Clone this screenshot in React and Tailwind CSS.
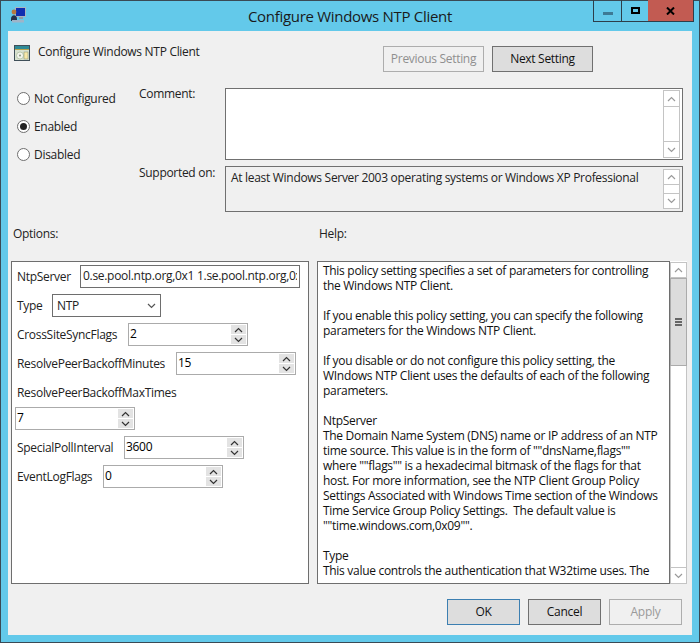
import React from "react";

const font = { fontFamily: "'Open Sans', 'Noto Sans', sans-serif" };

const helpLines = [
  "This policy setting specifies a set of parameters for controlling",
  "the Windows NTP Client.",
  "",
  "If you enable this policy setting, you can specify the following",
  "parameters for the Windows NTP Client.",
  "",
  "If you disable or do not configure this policy setting, the",
  "WIndows NTP Client uses the defaults of each of the following",
  "parameters.",
  "",
  "NtpServer",
  "The Domain Name System (DNS) name or IP address of an NTP",
  "time source. This value is in the form of \"\"dnsName,flags\"\"",
  "where \"\"flags\"\" is a hexadecimal bitmask of the flags for that",
  "host. For more information, see the NTP Client Group Policy",
  "Settings Associated with Windows Time section of the Windows",
  "Time Service Group Policy Settings.  The default value is",
  "\"\"time.windows.com,0x09\"\".",
  "",
  "Type",
  "This value controls the authentication that W32time uses. The",
];

function Chevron({ up, className = "" }) {
  return (
    <svg width="9" height="6" viewBox="0 0 9 6" className={className}>
      <path d={up ? "M1 5 L4.5 1.5 L8 5" : "M1 1 L4.5 4.5 L8 1"} fill="none" stroke="currentColor" strokeWidth="1.2" />
    </svg>
  );
}

function ScrollBtn({ up, className = "h-[17px]" }) {
  return (
    <div className={`flex w-[17px] items-center justify-center border border-[#c4c4c4] bg-white text-[#9a9a9a] ${className}`}>
      <Chevron up={up} />
    </div>
  );
}

function Spinner({ value, className = "" }) {
  return (
    <div className={`flex h-[23px] w-[120px] border border-[#ababab] bg-white pr-[1px] ${className}`}>
      <span className="flex-1 pl-[1px] text-[12px] leading-[19px] text-black">{value}</span>
      <div className="flex w-[15px] flex-col gap-[1px] pt-[1px]">
        <div className="flex h-[9px] items-center justify-center bg-[#e3e3e3] text-[#333]"><Chevron up /></div>
        <div className="flex h-[9px] items-center justify-center bg-[#e3e3e3] text-[#333]"><Chevron /></div>
      </div>
    </div>
  );
}

function Radio({ label, checked }) {
  return (
    <div className="flex h-[28px] items-center gap-[4px] text-[12px] text-[#222]">
      <div className="mt-[-1px] flex h-[13px] w-[13px] items-center justify-center rounded-full border border-[#6f6f6f] bg-white">
        {checked && <div className="h-[7px] w-[7px] rounded-full bg-[#222]" />}
      </div>
      {label}
    </div>
  );
}

function Btn({ children, className = "" }) {
  return (
    <div className={`flex items-center justify-center border text-[12px] ${className}`}>{children}</div>
  );
}

function OptionRow({ label, labelClass = "", children, className = "" }) {
  return (
    <div className={`flex h-[29px] items-center text-[12px] text-[#222] ${className}`}>
      <span className={`shrink-0 ${labelClass}`}>{label}</span>
      {children}
    </div>
  );
}

export default function App() {
  return (
    <div className="flex h-[643px] w-[700px] flex-col border border-[#3a4a55] bg-[#63c9ea] tracking-[-0.3px]" style={font}>
      {/* Title bar */}
      <div className="relative flex h-[30px] shrink-0 items-center justify-center text-[15px] text-[#1a1a1a]">
        <svg width="17" height="17" viewBox="0 0 17 17" className="absolute left-[9px] top-[5px]">
          <rect x="5.5" y="1.5" width="10" height="9" fill="#0f2fb0" stroke="#a9b4bf" />
          <rect x="9" y="11" width="4" height="2" fill="#8e9aa6" />
          <path d="M1 13 C1 8 7 8 7 13 L7 15 L1 15 Z" fill="#26324a" />
          <circle cx="4" cy="6" r="2.4" fill="#b5793f" />
          <rect x="2" y="14" width="12" height="2.5" fill="#9fb4c8" />
        </svg>
        Configure Windows NTP Client
        <div className="absolute right-[5px] top-[-1px] flex h-[22px] border border-t-0 border-[#2d3e4a]">
          <div className="flex w-[28px] items-center justify-center border-r border-[#2d3e4a]">
            <div className="mt-[5px] h-[3px] w-[10px] bg-[#3d7a95]" />
          </div>
          <div className="flex w-[26px] items-center justify-center">
            <div className="h-[7px] w-[9px] border-2 border-black" />
          </div>
          <div className="flex w-[45px] items-center justify-center bg-[#c25b52]">
            <svg width="9" height="8" viewBox="0 0 9 8"><path d="M1 0.5 L8 7.5 M8 0.5 L1 7.5" stroke="#000" strokeWidth="2" /></svg>
          </div>
        </div>
      </div>

      {/* Client area */}
      <div className="mx-[7px] flex h-[604px] flex-col bg-[#f0f0f0] text-[12px]">
        <div className="flex h-[57px] shrink-0">
          <div className="flex flex-1 items-start gap-[8px] pl-[6px] pt-[14px] text-[#222]">
            <svg width="16" height="16" viewBox="0 0 16 16" className="shrink-0">
              <rect x="0" y="0" width="16" height="16" fill="#3f4f58" />
              <rect x="1" y="1" width="14" height="3" fill="#2f8a96" />
              <rect x="1" y="4" width="14" height="1" fill="#b8a24a" />
              <rect x="1" y="5" width="14" height="10" fill="#d9e2d0" />
              <circle cx="6" cy="10.5" r="3.5" fill="#f2f4ec" stroke="#9bb08a" strokeWidth="0.6" />
              <circle cx="6" cy="10.5" r="0.9" fill="#7a8a70" />
              <rect x="10" y="7" width="4" height="7" fill="#f6e7a8" stroke="#7d8a6c" strokeWidth="0.5" />
            </svg>
            <span className="leading-[14px]">Configure Windows NTP Client</span>
          </div>
          <div className="flex gap-[8px] pr-[99px] pt-[15px]">
            <Btn className="h-[26px] w-[101px] border-[#adadad] text-[#8f8f8f]">Previous Setting</Btn>
            <Btn className="h-[26px] w-[101px] border-[#707070] bg-[#dddddd] text-[#111]">Next Setting</Btn>
          </div>
        </div>

        <div className="flex h-[137px] shrink-0">
          <div className="w-[131px] pl-[9px]">
            <div className="mt-[-3px]">
              <Radio label="Not Configured" />
              <Radio label="Enabled" checked />
              <Radio label="Disabled" />
            </div>
          </div>
          <div className="flex flex-col gap-[6px]">
            <div className="flex">
              <span className="mt-[-3px] w-[86px] text-[#222]">Comment:</span>
              <div className="flex h-[72px] w-[458px] justify-end border border-[#707070] bg-white py-[1px] pr-[2px]">
                <div className="flex flex-col">
                  <ScrollBtn up />
                  <div className="h-[34px] w-[17px] border-x border-[#c4c4c4]" />
                  <ScrollBtn />
                </div>
              </div>
            </div>
            <div className="flex">
              <span className="mt-[-2px] w-[86px] text-[#222]">Supported on:</span>
              <div className="flex h-[46px] w-[458px] justify-between border border-[#707070] bg-[#f0f0f0] pr-[2px] pt-[2px]">
                <span className="pl-[5px] text-[#222]">At least Windows Server 2003 operating systems or Windows XP Professional</span>
                <div className="flex shrink-0 flex-col">
                  <ScrollBtn up className="h-[16px]" />
                  <div className="h-[8px] w-[17px] border-x border-[#c4c4c4] bg-white" />
                  <ScrollBtn className="h-[16px]" />
                </div>
              </div>
            </div>
          </div>
        </div>

        <div className="flex h-[36px] shrink-0 pl-[5px] text-[#222]">
          <span className="w-[306px]">Options:</span>
          <span>Help:</span>
        </div>

        <div className="flex h-[323px] shrink-0 pl-[3px]">
          <div className="h-full w-[298px] border border-[#6e6e6e] bg-white pl-[5px]">
            <OptionRow label="NtpServer" labelClass="w-[63px]">
              <div className="h-[23px] w-[220px] border border-[#6e6e6e] px-[2px] leading-[19px]">
                <div className="overflow-hidden whitespace-nowrap">0.se.pool.ntp.org,0x1 1.se.pool.ntp.org,0x1</div>
              </div>
            </OptionRow>
            <OptionRow label="Type" labelClass="w-[35px]">
              <div className="flex h-[23px] w-[109px] items-center justify-between border border-[#6e6e6e] pl-[4px] pr-[4px]">
                NTP
                <Chevron className="text-[#555]" />
              </div>
            </OptionRow>
            <OptionRow label="CrossSiteSyncFlags" labelClass="w-[111px]">
              <Spinner value="2" />
            </OptionRow>
            <OptionRow label="ResolvePeerBackoffMinutes" labelClass="w-[159px]">
              <Spinner value="15" />
            </OptionRow>
            <OptionRow label="ResolvePeerBackoffMaxTimes" />
            <Spinner value="7" className="ml-[-2px]" />
            <OptionRow label="SpecialPollInterval" labelClass="w-[107px]" className="mt-[3px]">
              <Spinner value="3600" />
            </OptionRow>
            <OptionRow label="EventLogFlags" labelClass="w-[86px]">
              <Spinner value="0" />
            </OptionRow>
          </div>

          <div className="ml-[8px] flex h-full">
            <div className="w-[353px] overflow-hidden border border-[#6e6e6e] bg-white pl-[5px] pt-[1px] text-[12px] leading-[15px] text-[#111]">
              {helpLines.map((line, i) => (
                <div key={i} className="h-[15px] whitespace-pre">{line}</div>
              ))}
            </div>
            <div className="flex w-[17px] flex-col bg-white pt-[1px]">
              <ScrollBtn up className="h-[16px]" />
              <div className="flex h-[88px] items-center justify-center border border-[#ababab] bg-[#dcdcdc]">
                <div className="flex flex-col gap-[1px]">
                  <div className="h-[2px] w-[7px] bg-[#666]" />
                  <div className="h-[2px] w-[7px] bg-[#666]" />
                  <div className="h-[2px] w-[7px] bg-[#666]" />
                </div>
              </div>
              <div className="flex-1 border-x border-[#c4c4c4]" />
              <ScrollBtn />
            </div>
          </div>
        </div>

        <div className="flex flex-1 justify-end gap-[8px] pr-[10px] pt-[15px]">
          <Btn className="h-[26px] w-[73px] border-[#3c7fb1] bg-[#dddddd] text-[#111]">OK</Btn>
          <Btn className="h-[26px] w-[73px] border-[#707070] bg-[#dddddd] text-[#111]">Cancel</Btn>
          <Btn className="h-[26px] w-[73px] border-[#adadad] text-[#9a9a9a]">Apply</Btn>
        </div>
      </div>
    </div>
  );
}
